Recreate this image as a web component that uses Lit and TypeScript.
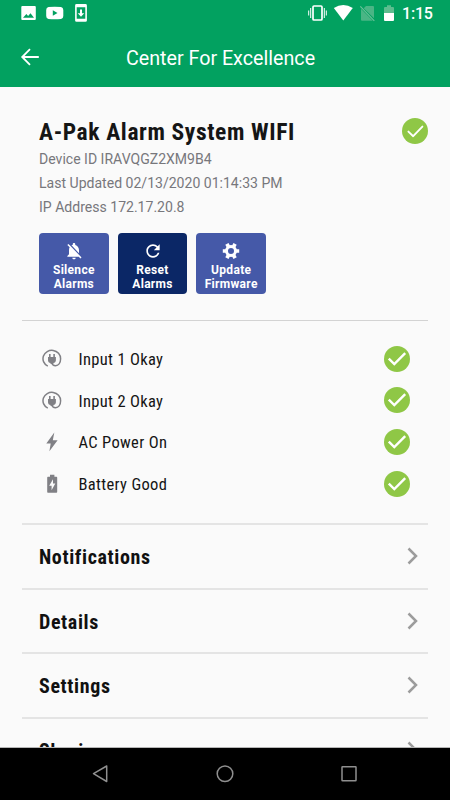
import { LitElement, html, css, svg } from "lit";
import { customElement } from "lit/decorators.js";

const check = (thin: boolean) => html`<svg class="check" viewBox="0 0 26 26">
  <circle cx="13" cy="13" r="13" fill="#8fc746" />
  ${thin
    ? svg`<path d="M6.4 13.6 11.2 18.2 20.4 8.6" fill="none" stroke="#fff" stroke-width="1.9" stroke-linecap="round" stroke-linejoin="round" />`
    : svg`<path d="M4.8 12.6 10.3 18 21.2 7.2" fill="none" stroke="#fff" stroke-width="2.4" />`}
</svg>`;

const plug = html`<svg width="20" height="20" viewBox="0 0 20 20">
  <path d="M5.800 17.200A8.800 8.400 0 1 1 18.600 9.800c0 4.300-2.300 6.900-5 6.900-2.100 0-3.400-1-3.600-2.700" fill="none" stroke="#808085" stroke-width="1.500" />
  <path d="M7 5h1.600v3h2.700V5h1.600v3h1v3.200c0 1.500-1.200 2.600-2.500 2.900v1H8.500v-1C7 13.800 6 12.700 6 11.200V8h1z" fill="#808085" />
</svg>`;
const bolt = html`<svg width="20" height="20" viewBox="0 0 20 20">
  <path d="M12.300.500 4.300 11.400h4.400L7.400 19.300l8.200-11.100h-4.800z" fill="#808085" />
</svg>`;
const battery = html`<svg width="20" height="20" viewBox="0 0 20 20">
  <path d="M8 .8h4.400v1.900h1.800c.6 0 1 .4 1 1v14.100c0 .6-.4 1-1 1H6.200c-.6 0-1-.4-1-1V3.700c0-.6.4-1 1-1H8z" fill="#808085" />
  <path d="M11 5.200 7.200 11.800h2.400v4.500l3.700-6.700H11z" fill="#fafafa" />
</svg>`;
const bellOff = html`<svg width="20" height="20" viewBox="0 0 24 24" fill="#fff">
  <path d="M20 18.690 7.840 6.140 5.270 3.490 4 4.760l2.800 2.800v.01c-.52.99-.8 2.160-.8 3.420v5l-2 2v1h13.730l2 2L21 19.720l-1-1.030zM12 22c1.110 0 2-.89 2-2h-4c0 1.110.89 2 2 2zm6-7.320V11c0-3.080-1.640-5.640-4.500-6.320V4c0-.83-.67-1.500-1.500-1.500s-1.500.67-1.500 1.500v.68c-.15.03-.29.08-.42.12-.1.030-.2.070-.3.110h-.01c-.01 0-.01 0-.02.010-.23.090-.46.200-.68.310 0 0-.01 0-.01.010L18 14.680z" />
</svg>`;
const refresh = html`<svg width="20" height="20" viewBox="0 0 24 24" fill="#fff">
  <path d="M17.650 6.350C16.200 4.900 14.210 4 12 4c-4.420 0-7.990 3.580-7.990 8s3.570 8 7.990 8c3.730 0 6.840-2.550 7.730-6h-2.080c-.82 2.330-3.040 4-5.650 4-3.310 0-6-2.690-6-6s2.690-6 6-6c1.660 0 3.140.69 4.220 1.780L13 11h7V4l-2.350 2.350z" />
</svg>`;
const gear = html`<svg width="20" height="20" viewBox="0 0 20 20">
  <g fill="none" stroke="#fff">
    <circle cx="10" cy="10" r="4.500" stroke-width="3" />
    <path d="M15 10h3.200M5 10H1.800M12.600 5.600l1.500-2.700M7.400 5.600 5.900 2.900M12.600 14.400l1.500 2.700M7.400 14.400l-1.500 2.700" stroke-width="3.700" />
  </g>
</svg>`;

@customElement("app-root")
export class AppRoot extends LitElement {
  static styles = css`
    :host {
      display: flex;
      flex-direction: column;
      width: 450px;
      height: 800px;
      overflow: hidden;
      background: #fafafa;
      font-family: Roboto, "Liberation Sans", sans-serif;
    }
    svg { display: block; flex: none; }
    header { background: #02a160; color: #fff; height: 87px; flex: none; }
    .status { display: flex; height: 27px; align-items: center; padding: 0 17px 0 20px; }
    .status .space { flex: 1; }
    .clock { font-size: 16px; font-weight: 500; line-height: 28px; letter-spacing: -.2px; width: 31px; }
    .bar { display: grid; grid-template-columns: 60px 321px 69px; height: 60px; align-items: center; }
    .bar svg { margin: -1px 0 0 20px; }
    .bar h1 { margin: 3px 0 0; text-align: center; font-weight: 400; font-size: 19.700px; line-height: 26px; }
    main { flex: 1; min-height: 0; overflow: hidden; padding: 0 22px; border-bottom: 1px solid #b5b5b5; }
    .cond { font-family: "Roboto Condensed", Roboto, sans-serif; font-stretch: 75%; white-space: nowrap; }
    .device { height: 233px; border-bottom: 1px solid #d3d3d3; padding: 0 0 0 17px; }
    .head { display: flex; justify-content: space-between; height: 60px; padding-top: 31px; box-sizing: border-box; }
    .head h2 { margin: 0; font-size: 23.500px; line-height: 29px; font-weight: 700; letter-spacing: .620px; color: #151515; }
    .check { width: 26px; height: 26px; }
    .info { font-size: 14.050px; line-height: 24.100px; color: #77777c; height: 86px; }
    .actions { display: flex; gap: 9px; }
    .action { width: 69.700px; height: 61px; box-sizing: border-box; border-radius: 4px; background: #4559a8; color: #fff;
      display: flex; flex-direction: column; align-items: center; padding-top: 8px; font-size: 12px; line-height: 14px;
      font-weight: 700; text-align: center; letter-spacing: .3px; }
    .action span { margin-top: 1.500px; }
    .action.dark { background: #0b2766; }
    .inputs { padding: 17px 18px 0 20px; height: 185px; border-bottom: 2px solid #e4e4e4; }
    .row { display: flex; align-items: center; height: 41.700px; color: #151515; }
    .row .check { margin-top: -.5px; }
    .row .cond { flex: 1; margin-left: 16.500px; font-size: 16.500px; letter-spacing: .330px; padding-top: 1px; }
    .section { display: flex; align-items: center; justify-content: space-between; height: 62.600px; padding: 0 8px 0 17px;
      border-bottom: 2px solid #e4e4e4; }
    .section .cond { font-size: 20px; font-weight: 700; letter-spacing: .620px; color: #111; padding-top: 2px; }
    nav { flex: none; height: 52px; background: #000; display: flex; justify-content: space-between; padding: 0 92px 0 91px; align-items: center; }
  `;

  render() {
    return html`
      <header>
        <div class="status">
          <svg width="70" height="27" viewBox="20 0 70 27" fill="#fff">
            <path d="M22.300 6h12.500q1 0 1 1v12q0 1-1 1H22.300q-1 0-1-1V7q0-1 1-1zM23 17.800h11l-3.500-4.600-2.400 2.800-1.700-1.900z" fill-rule="evenodd" />
            <path d="M48.500 7Q54.700 6.500 61 7q2.300.3 2.300 3v6q0 2.700-2.300 3-6.300.5-12.500 0-2.300-.3-2.300-3v-6q0-2.700 2.300-3zM52.800 10.300v5.400l4.700-2.700z" fill-rule="evenodd" />
            <path d="M76.500 4h9q1.400 0 1.400 1.400v15q0 1.400-1.400 1.400h-9q-1.400 0-1.400-1.400v-15Q75.100 4 76.500 4zM76.700 7.300v11.400h8.600V7.300zM80 9.500h2v3.800h2.300L81 16.800l-3.300-3.500H80z" fill-rule="evenodd" />
          </svg>
          <span class="space"></span>
          <svg width="94" height="27" viewBox="308 0 94 27">
            <rect x="313" y="6" width="9" height="14" rx="1" fill="none" stroke="#fff" stroke-width="1.700" />
            <path d="M310.700 8v10M308.700 10.500v5M324.300 8v10M326.300 10.500v5" stroke="#fff" stroke-width="1" />
            <path d="M333.800 8q9.500-6 19 0L343.300 20.600z" fill="#fff" />
            <path d="M366 6h7q1 0 1 1v11.300L363.700 8.200zM361 8.700l11.800 12.100H362q-1 0-1-1z" fill="#4ab585" />
            <path d="M360.300 6.300 374.300 20.800" stroke="#6cc39a" stroke-width="1.100" />
            <path d="M384 13V8q0-1 1-1h2V5.200h4V7h2q1 0 1 1v5z" fill="#5dbd8f" />
            <path d="M384 13h10v7q0 1-1 1h-8q-1 0-1-1z" fill="#fff" />
          </svg>
          <span class="clock">1:15</span>
        </div>
        <div class="bar">
          <svg width="20" height="18" viewBox="0 0 20 18"><path d="M10 1.200 2.200 9l7.800 7.800M2.200 9h16.600" fill="none" stroke="#fff" stroke-width="1.800" /></svg>
          <h1>Center For Excellence</h1>
        </div>
      </header>
      <main>
        <section class="device">
          <div class="head"><h2 class="cond">A-Pak Alarm System WIFI</h2>${check(true)}</div>
          <div class="info">
            <div>Device ID IRAVQGZ2XM9B4</div>
            <div>Last Updated 02/13/2020 01:14:33 PM</div>
            <div>IP Address 172.17.20.8</div>
          </div>
          <div class="actions">
            <div class="action">${bellOff}<span>Silence<br />Alarms</span></div>
            <div class="action dark">${refresh}<span>Reset<br />Alarms</span></div>
            <div class="action">${gear}<span>Update<br />Firmware</span></div>
          </div>
        </section>
        <section class="inputs">
          ${[
            [plug, "Input 1 Okay"],
            [plug, "Input 2 Okay"],
            [bolt, "AC Power On"],
            [battery, "Battery Good"],
          ].map(([icon, label]) => html`<div class="row">${icon}<span class="cond">${label}</span>${check(false)}</div>`)}
        </section>
        ${["Notifications", "Details", "Settings", "Sharing"].map(
          (label) => html`<div class="section"><span class="cond">${label}</span>
            <svg width="14" height="18" viewBox="0 0 14 18"><path d="M2.500 1.500 10 9l-7.500 7.500" fill="none" stroke="#9c9c9c" stroke-width="2.500" /></svg></div>`
        )}
      </main>
      <nav>
        <svg width="18" height="20" viewBox="0 0 18 20"><path d="M15.700 2v15.500L2.500 9.700z" fill="none" stroke="#8f8f8f" stroke-width="1.500" stroke-linejoin="round" /></svg>
        <svg width="18" height="20" viewBox="0 0 18 20"><circle cx="9" cy="9.700" r="7.800" fill="none" stroke="#8f8f8f" stroke-width="1.500" /></svg>
        <svg width="18" height="20" viewBox="0 0 18 20"><rect x="2" y="2.700" width="14" height="14" rx=".5" fill="none" stroke="#8f8f8f" stroke-width="1.500" /></svg>
      </nav>
    `;
  }
}
